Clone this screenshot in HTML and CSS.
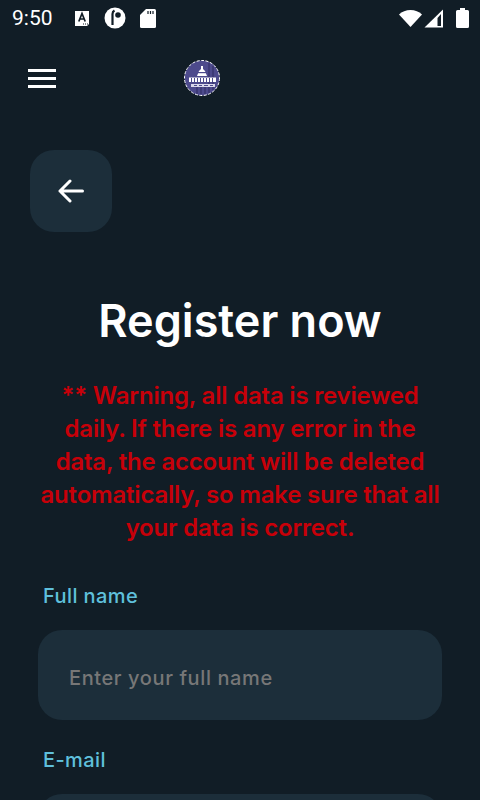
FILE: index.html
```html
<!DOCTYPE html>
<html lang="en">
<head>
    <meta charset="UTF-8">
    <meta name="viewport" content="width=device-width, initial-scale=1.0">
    <title>Register now</title>
    <link rel="stylesheet" href="styles.css">
</head>
<body>
<div class="screen">
    <div class="status-bar">
        <div class="status-left">
            <span class="clock">9:50</span>
            <svg class="note-a" width="16" height="17" viewBox="0 0 16 17">
                <path d="M1 1h14v13l-2 2H1z" fill="#fff"/>
                <path d="M4.800 11.500 8 3.500l3.200 8M6 9h4" fill="none" stroke="#111d26" stroke-width="1.700"/>
                <path d="M9 13.500h1v1H9zM11 13.500h1v1h-1zM13 13.500h1v1h-1z" fill="#111d26"/>
            </svg>
            <svg class="note-p" width="22" height="22" viewBox="0 0 22 22">
                <circle cx="11" cy="11" r="10.500" fill="#fff"/>
                <path d="M8.500 18V7c0-1.500.7-2.800 2-3.500" fill="none" stroke="#111d26" stroke-width="2.200"/>
                <circle cx="14" cy="8" r="2.800" fill="#111d26"/>
            </svg>
            <svg class="note-sd" width="16" height="19" viewBox="0 0 16 19">
                <path d="M6 0h8.500A1.500 1.500 0 0 1 16 1.500v16a1.500 1.500 0 0 1-1.500 1.500h-13A1.500 1.500 0 0 1 0 17.500V6z" fill="#fff"/>
                <path d="M8 2v3M10.500 2v3M13 2v3" stroke="#111d26" stroke-width="1.200"/>
            </svg>
        </div>
        <div class="status-right">
            <svg width="23" height="17" viewBox="0 0 23 17"><path d="M0 4.500C3 1.700 7 0 11.500 0S20 1.700 23 4.500L11.500 17z" fill="#fff"/></svg>
            <svg class="signal" width="20" height="19" viewBox="0 0 20 19">
                <path d="M19 .5V18.500H.5z" fill="#fff"/>
                <path d="M13.500 9v8H17V5z" fill="#111d26"/>
            </svg>
            <svg width="13" height="20" viewBox="0 0 13 20"><path d="M4 0h5v2h2.500A1.500 1.500 0 0 1 13 3.500v15a1.500 1.500 0 0 1-1.500 1.500h-10A1.500 1.500 0 0 1 0 18.500v-15A1.500 1.500 0 0 1 1.500 2H4z" fill="#fff"/></svg>
        </div>
    </div>

    <div class="app-bar">
        <button class="menu-btn" aria-label="Menu">
            <span></span><span></span><span></span>
        </button>
        <svg class="logo" width="36" height="36" viewBox="0 0 36 36">
            <circle cx="18" cy="18" r="17.500" fill="#4d4a8c" stroke="#fff" stroke-width="1" stroke-dasharray="3 1.500"/>
            <path d="M25 3v30M29 6v24M13 27v7M17 27v7M21 27v7" stroke="#39366f" stroke-width="1.500"/>
            <path d="M17 6h2v3l2 2 2 5H13l2-5 2-2z" fill="#fff"/>
            <path d="M14 12h8v1.200h-8z" fill="#4d4a8c"/>
            <path d="M5 17.500h27v4.500H5z" fill="#fff"/>
            <path d="M7.500 18v4M10.500 18v4M13.500 18v4M16.500 18v4M19.500 18v4M22.500 18v4M25.500 18v4M28.500 18v4" stroke="#4d4a8c" stroke-width="1"/>
            <path d="M7 24h24v3H7z" fill="#d9d8ea"/>
            <path d="M10 25h3v1h-3zM15 25h3v1h-3zM20 25h4v1h-4zM26 25h3v1h-3z" fill="#4d4a8c"/>
        </svg>
    </div>

    <button class="back-btn" aria-label="Back">
        <svg width="26" height="24" viewBox="0 0 26 24">
            <path d="M24.500 12H2M12 2 2 12l10 10" fill="none" stroke="#fff" stroke-width="3" stroke-linecap="round" stroke-linejoin="round"/>
        </svg>
    </button>

    <h1>Register now</h1>
    <p class="warning">** Warning, all data is reviewed daily. If there is any error in the data, the account will be deleted automatically, so make sure that all your data is correct.</p>

    <form class="register-form">
        <div class="field">
            <label for="full-name">Full name</label>
            <input type="text" id="full-name" placeholder="Enter your full name">
        </div>
        <div class="field">
            <label for="email">E-mail</label>
            <input type="text" id="email">
        </div>
    </form>
</div>
</body>
</html>
```

FILE: styles.css
```css
* {
    box-sizing: border-box;
}

html, body {
    margin: 0;
    height: 100%;
    overflow: hidden;
}

body {
    font-family: "Inter", "Noto Sans", sans-serif;
    background-color: #111d26;
    color: #fff;
}

.screen {
    height: 800px;
    overflow: hidden;
}

.status-bar {
    display: flex;
    justify-content: space-between;
    align-items: center;
    height: 36px;
    padding: 0 11px 0 12px;
}

.status-left {
    display: flex;
    align-items: center;
}

.clock {
    font-family: "Roboto", sans-serif;
    font-size: 21px;
    width: 62px;
}

.note-p {
    margin: 0 14px 0 14px;
}

.status-right {
    display: flex;
    align-items: center;
    gap: 2px;
}

.signal {
    margin-right: 10px;
}

.app-bar {
    display: flex;
    align-items: center;
    height: 56px;
    padding: 28px 0 0 28px;
}

.menu-btn {
    display: flex;
    flex-direction: column;
    gap: 5px;
    width: 28px;
    padding: 0;
    border: none;
    background: none;
}

.menu-btn span {
    height: 3px;
    background-color: #fff;
}

.logo {
    margin-left: 128px;
}

.back-btn {
    display: flex;
    justify-content: center;
    align-items: center;
    width: 82px;
    height: 82px;
    margin: 58px 0 0 30px;
    border: none;
    border-radius: 24px;
    background-color: #1c2e3a;
}

h1 {
    margin: 59px 0 0 0;
    font-size: 45px;
    line-height: 60px;
    font-weight: 600;
    text-align: center;
}

.warning {
    margin: 28px 36px 0 36px;
    font-size: 24px;
    line-height: 33px;
    font-weight: 600;
    letter-spacing: -0.2px;
    color: #c70009;
    text-align: center;
}

.register-form {
    margin-top: 38px;
    padding: 0 38px;
}

.field label {
    display: block;
    margin: 0 0 20px 5px;
    font-size: 20px;
    line-height: 28px;
    font-weight: 500;
    letter-spacing: 0.4px;
    color: #5fc0dc;
}

.field input {
    display: block;
    width: 100%;
    height: 90px;
    margin-bottom: 26px;
    padding: 6px 31px 0 31px;
    border: none;
    border-radius: 24px;
    background-color: #1c2e3a;
    font-family: inherit;
    font-size: 20px;
    font-weight: 500;
    letter-spacing: 0.6px;
    color: #fff;
}

.field input::placeholder {
    color: #777;
    opacity: 1;
}
```
